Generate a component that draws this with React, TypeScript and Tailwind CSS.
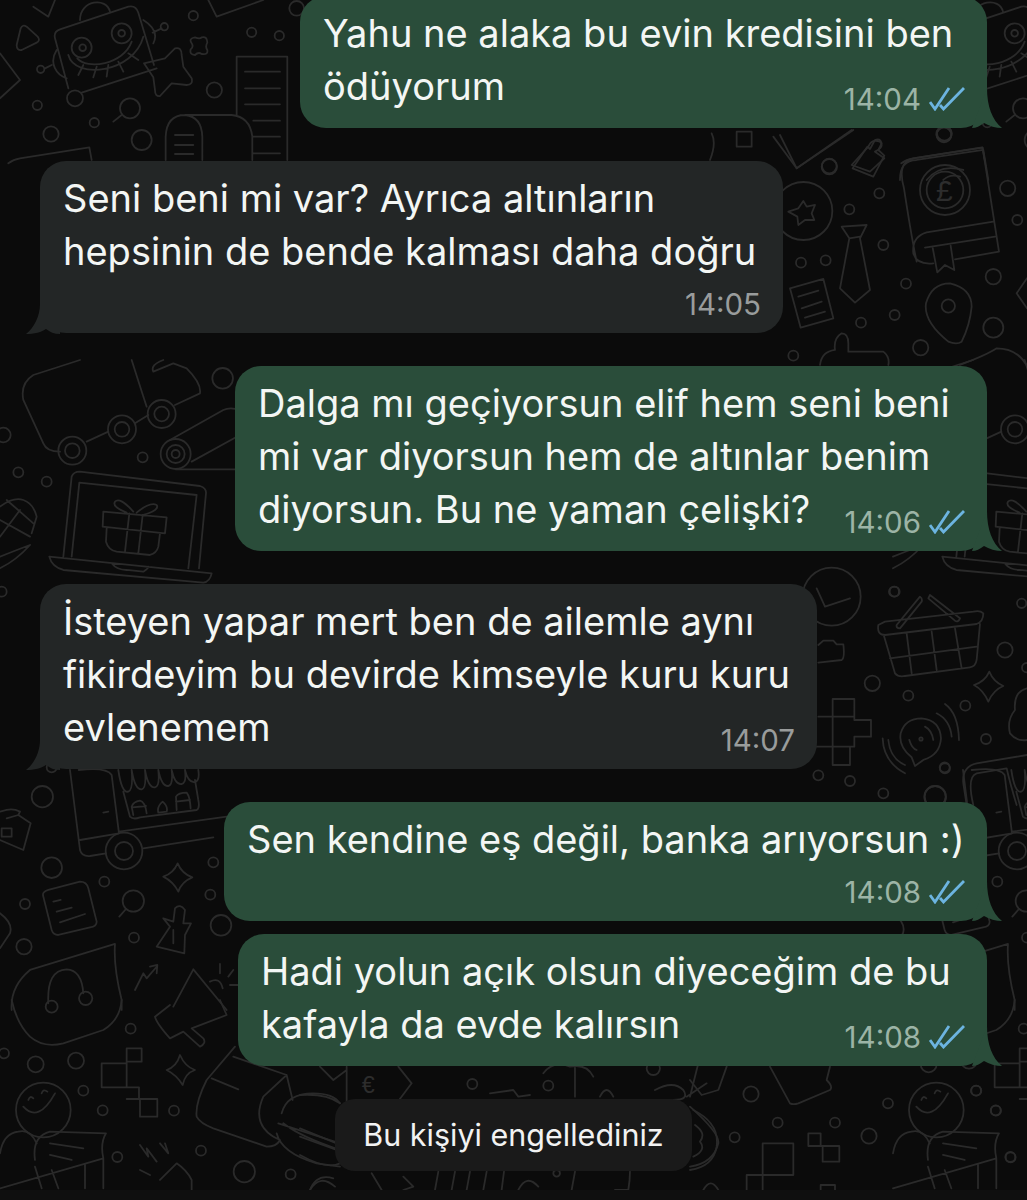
const font = { fontFamily: "Inter, 'Liberation Sans', sans-serif" };

type Msg = {
  out: boolean;
  width: number;
  lines: string[];
  time: string;
  inline: boolean;
  mt: string;
};

const messages: Msg[] = [
  { out: true, width: 687, lines: ["Yahu ne alaka bu evin kredisini ben", "ödüyorum"], time: "14:04", inline: true, mt: "-mt-[4px]" },
  { out: false, width: 743, lines: ["Seni beni mi var? Ayrıca altınların", "hepsinin de bende kalması daha doğru"], time: "14:05", inline: false, mt: "mt-[33px]" },
  { out: true, width: 752, lines: ["Dalga mı geçiyorsun elif hem seni beni", "mi var diyorsun hem de altınlar benim", "diyorsun. Bu ne yaman çelişki?"], time: "14:06", inline: true, mt: "mt-[33px]" },
  { out: false, width: 777, lines: ["İsteyen yapar mert ben de ailemle aynı", "fikirdeyim bu devirde kimseyle kuru kuru", "evlenemem"], time: "14:07", inline: true, mt: "mt-[33px]" },
  { out: true, width: 763, lines: ["Sen kendine eş değil, banka arıyorsun :)"], time: "14:08", inline: false, mt: "mt-[33px]" },
  { out: true, width: 749, lines: ["Hadi yolun açık olsun diyeceğim de bu", "kafayla da evde kalırsın"], time: "14:08", inline: true, mt: "mt-[13px]" },
];

function Ticks() {
  return (
    <svg width="36" height="24" viewBox="0 0 36 24" fill="none" stroke="#6cb4e0" strokeWidth="2.8" className="ml-[8px] mb-[2px] shrink-0">
      <path d="M1 15l5 7L20 1" />
      <path d="M11 18l3.5 4L35 1" />
    </svg>
  );
}

function Time({ msg }: { msg: Msg }) {
  return (
    <div className="flex shrink-0 items-end">
      <span className={`text-[29.5px] leading-[27px] ${msg.out ? "text-[#9cb4a6]" : "text-[#999c9c]"}`}>{msg.time}</span>
      {msg.out && <Ticks />}
    </div>
  );
}

function Bubble({ msg }: { msg: Msg }) {
  const last = msg.lines.length - 1;
  return (
    <div
      className={`relative rounded-[26px] pt-[11px] pb-[15px] pl-[23px] pr-[22px] text-[38px] leading-[53px] text-[#f3f6f4] ${msg.mt} ${
        msg.out ? "self-end mr-[40px] bg-[#2a4d3a]" : "self-start ml-[40px] bg-[#232626]"
      }`}
      style={{ width: msg.width }}
    >
      {msg.lines.map((line, i) => (
        <div key={i} className="flex items-end justify-between whitespace-nowrap">
          <span>{line}</span>
          {msg.inline && i === last && <Time msg={msg} />}
        </div>
      ))}
      {!msg.inline && (
        <div className="flex h-[40px] items-end justify-end">
          <Time msg={msg} />
        </div>
      )}
      {msg.out ? (
        <svg width="30" height="40" viewBox="0 0 30 40" className="absolute -right-[15px] bottom-0" fill="#2a4d3a">
          <path d="M15 0C15 18 20 32 30 40C24 40 17 38 12 35C8 38 4 40 0 40Z" />
        </svg>
      ) : (
        <svg width="34" height="30" viewBox="0 0 34 30" className="absolute -left-[14px] -bottom-[1px]" fill="#232626">
          <path d="M14 0C14 12 8 24 0 30C8 30 16 28 20 25C24 28 28 30 34 30L34 0Z" />
        </svg>
      )}
    </div>
  );
}

type C = [number, number, number];

function Layer({ x, y, d, c, text }: { x: number; y: number; d: string; c: C[]; text?: [string, number, number, number][] }) {
  return (
    <g transform={`translate(${x} ${y}) scale(0.3333)`}>
      <path d={d} />
      {c.map(([cx, cy, r], i) => (
        <circle key={i} cx={cx} cy={cy} r={r} />
      ))}
      {text?.map(([t, tx, ty, s], i) => (
        <text key={i} x={tx} y={ty} fontSize={s} fill="#2d2d2d" stroke="none" fontFamily="'Liberation Sans', sans-serif">
          {t}
        </text>
      ))}
    </g>
  );
}

function RepeatingDoodles() {
  return (
    <>
      {/* robot, star, document */}
      <Layer
        x={0}
        y={0}
        d="M165 115Q160 95 180 88L385 20Q408 15 415 38L462 195M470 205L245 278M205 265L165 115M240 60C240 0 320-10 330 35M170 150C145 190 170 225 200 235M430 60C470 85 470 110 460 130M458 98L485 85M135 205L155 195M205 165C225 240 400 220 430 110M232 175C260 210 370 195 395 125M250 195L235 225M290 200L280 232M325 195L320 230M355 185L370 215M385 160L415 180M432 190L495 175L525 145Q545 140 545 165L550 200L575 235Q580 255 560 255L515 250L480 288Q465 290 465 270L460 232ZM50 135L62 85Q68 72 80 80L113 110Q122 122 110 128L65 150Q50 152 50 135ZM575 130Q565 115 585 112Q600 118 605 112Q622 108 622 128Q615 140 622 150Q625 165 605 162Q595 155 585 165Q568 165 572 148Q582 140 575 130ZM710 345L710 170L862 170L862 480M735 215H840M735 265H840M735 313H840M760 362H840M760 410H840M760 460H840M497 480L497 410Q500 345 555 345L695 345Q750 350 757 410L757 480M555 345Q605 350 607 410L607 480M525 405H580M525 435H580M525 462H580M365 345L340 365M0 160L60 240L0 295M625 0L650 50L790 0M25 490Q40 478 60 475L268 442L275 480M100 20L145 50L165 0"
        c={[[245, 143, 30], [248, 143, 10], [365, 100, 30], [365, 100, 10], [493, 80, 11], [122, 208, 11], [225, 295, 24], [390, 325, 30], [580, 47, 14], [755, 97, 14], [838, 107, 14], [890, 25, 22], [643, 270, 23], [112, 316, 14], [283, 368, 14], [153, 402, 23], [425, 420, 30]]}
      />
      {/* conveyor and laptop */}
      <Layer
        x={0}
        y={360}
        d="M240 0L100 45Q60 70 70 120L130 250Q140 275 180 275M260 245L325 215M405 190L445 165M440 140Q430 110 395 0M525 135L600 100Q605 70 560 25L520 10L460 35Q450 15 490 0M510 240L670 150Q690 140 720 150M575 305L720 225M527 328L720 328M190 590L215 350Q220 335 240 335L600 378Q620 385 618 400L597 625M215 590L238 368L590 405L565 625M148 590L635 640Q630 665 610 668L190 630Q155 620 148 590ZM335 610Q350 630 380 630L430 635Q445 625 445 620M310 455L500 472L495 520L308 500ZM320 505L318 545Q325 570 350 575L450 585Q470 580 475 560L480 520M388 460L375 575M428 465L415 580M400 455Q360 410 345 425Q335 440 380 458M410 458Q450 425 470 435Q480 450 430 465M0 440Q40 410 70 420Q100 430 110 470L95 520M0 480L90 530M0 530L60 450M20 420L100 490M90 555Q50 600 0 625M0 590Q50 570 90 555"
        c={[[217, 272, 42], [217, 272, 22], [366, 208, 42], [366, 208, 22], [485, 162, 42], [485, 162, 22], [527, 282, 45], [527, 282, 27], [527, 282, 12], [668, 55, 31], [10, 225, 22], [428, 292, 15], [55, 337, 15], [140, 365, 15], [5, 695, 15]]}
      />
      {/* shop van, note, headset */}
      <Layer
        x={0}
        y={760}
        d="M210 30L240 270Q245 290 270 288L318 280M236 30Q320 20 335 45L357 220L240 240M430 265L640 232M357 215L680 170M370 95L390 170Q400 180 420 172L590 150Q600 145 595 120L585 60M355 30Q365 100 385 95Q400 90 395 30M395 30Q405 90 425 88Q440 85 435 30M435 30Q445 85 465 82Q480 80 475 30M475 30Q485 80 505 78Q520 75 515 30M515 30Q525 75 545 72Q560 70 555 30M555 30Q565 70 585 66Q600 62 595 30M325 155L310 158M400 165L395 140Q400 125 420 122Q435 125 440 160M398 142L438 138M475 158Q470 140 488 125Q505 140 500 155ZM530 150L528 110Q535 98 560 98Q570 110 572 145M528 125L570 120M0 155L20 150Q40 145 60 155L55 165L92 190L70 270L0 240M20 175L55 165M5 205H35V230H5ZM130 410Q125 395 145 390L240 365Q260 365 265 385L290 485Q290 500 270 502L175 525Q160 525 155 510ZM160 425L182 420M170 455L215 443M180 487L255 462M378 447L358 470M490 350Q520 340 533 310Q545 340 577 352Q545 365 535 395Q520 365 490 350ZM470 560L510 500L490 475L520 485L525 445Q540 430 555 450L550 490L573 490L555 525L553 580ZM520 510L520 550M405 690L430 640L440 655L472 618M450 620L472 615L470 640M35 750Q30 680 90 630L345 552Q340 620 365 720L365 750M145 730Q140 630 200 628Q245 630 250 700M520 740L580 628L680 750M660 612L660 640M700 630L685 650M690 675L715 675M630 665Q660 650 668 685M0 460Q40 490 30 520L0 565"
        c={[[372, 273, 55], [372, 273, 27], [127, 110, 32], [155, 323, 31], [313, 365, 15], [75, 432, 15], [72, 560, 23], [402, 533, 15], [640, 307, 15], [631, 404, 15], [663, 496, 31], [155, 22, 15], [257, 715, 20], [155, 740, 18], [400, 423, 32]]}
      />
      {/* smiley, hand, bag, burger */}
      <Layer
        x={0}
        y={1000}
        d="M35 0Q50 70 90 110Q130 145 190 130L310 90Q360 60 365 0M465 50L510 15M465 50Q470 70 510 115L550 95L600 140Q620 130 610 115L575 85L680 45L660 0M305 190H380V145H425V185H380V262H305ZM380 262H417V297H472V350H420V297H380M500 210Q530 200 540 165Q555 200 585 210Q555 220 548 255Q530 225 500 210ZM70 320Q115 370 165 280M85 300Q90 285 100 295M125 280Q130 265 142 275M55 395Q10 400 0 460M55 395Q90 385 110 430M105 480Q95 410 150 395L318 400Q300 430 310 475M150 430L250 445M150 465L215 480M0 565L310 475L310 565M255 495L255 565M105 500L125 565M155 510L175 565M420 435L445 470L440 445L470 485M480 430L505 460L495 430M420 510L450 525M480 540L530 490Q560 510 575 540L575 570M705 140L620 240Q585 310 590 350Q600 370 640 385L800 440Q830 440 840 420Q750 380 790 290L860 225L700 170M635 235L715 268M860 225L878 300M845 340Q860 280 940 280Q1000 280 1020 310M835 370L1020 430M830 400Q845 460 950 490L1020 500M850 370Q900 410 1020 450M930 570Q950 520 1000 535"
        c={[[130, 330, 82], [392, 86, 15], [12, 160, 15], [107, 193, 24], [228, 182, 24], [250, 272, 15], [308, 331, 15], [522, 332, 15], [352, 471, 15], [603, 452, 15], [733, 515, 32], [872, 523, 15]]}
      />
    </>
  );
}

function Doodles() {
  return (
    <svg width="1027" height="1190" viewBox="0 0 1027 1190" fill="none" stroke="#2a2a2a" strokeWidth="5.4" strokeLinejoin="round" strokeLinecap="round" className="absolute left-0 top-0 bg-[#0b0b0b]">
      <RepeatingDoodles />
      <g transform="translate(893 0)">
        <RepeatingDoodles />
      </g>
      {/* below first bubble */}
      <Layer
        x={700}
        y={0}
        d="M220 410L290 505L460 390M35 400Q50 430 30 480M110 395H155V440H110ZM455 495L505 440Q515 415 540 425Q555 440 525 455L553 475L510 515ZM600 540Q600 480 650 480L850 450L865 540M680 540Q720 490 790 510M730 540Q750 520 780 530"
        c={[[733, 400, 22], [388, 498, 22]]}
      />
      {/* book, pin, tie */}
      <Layer
        x={780}
        y={125}
        d="M410 410Q395 340 372 190Q350 110 400 100L608 68L657 380L525 403M640 290L440 322Q395 335 400 385Q410 420 460 415M645 335L435 368M458 368L472 442L495 420L523 435L512 362M505 650Q430 590 438 535Q455 475 510 475Q575 490 575 545Q570 600 545 650Q530 660 505 650ZM185 305L260 300L240 340L270 495L225 533L180 490L208 340ZM208 340L240 335M25 260L55 250L70 228L80 245L105 240L95 265L103 285L75 285L55 300L52 275ZM218 130L262 65L270 72L285 45Q300 38 305 55L295 75L313 92L280 155ZM30 490L130 462L160 580L62 608ZM55 515L115 497M65 550L125 530M75 578L135 560M0 30L50 130L215 15M120 720Q125 680 165 675Q160 640 185 625Q205 625 205 655L205 680L310 680Q330 695 325 720M540 720Q620 690 650 670Q710 670 740 720M741 460L710 505L741 550"
        c={[[495, 195, 75], [495, 195, 55], [505, 543, 20], [70, 258, 87], [148, 125, 23], [298, 205, 15], [208, 253, 15], [310, 360, 15], [63, 413, 15], [137, 406, 15], [378, 476, 15], [640, 455, 23], [683, 190, 23], [712, 285, 15], [243, 593, 15], [344, 570, 15], [40, 692, 15], [422, 668, 23], [640, 608, 30], [492, 30, 22]]}
        text={[["£", 468, 228, 90]]}
      />
      {/* basket, speaker, blocks */}
      <Layer
        x={810}
        y={550}
        d="M20 115L45 170L120 145M25 285L40 272L70 272L80 283L100 283Q105 325 95 330L25 338M205 225Q200 255 225 255L500 222Q520 215 520 190Q510 180 490 185L225 215ZM222 258L255 370Q265 382 285 378L480 352Q497 350 500 330L510 222M290 250L305 370M365 245L380 360M435 235L455 355M240 325L500 290M260 225L330 140Q338 145 335 155L270 235Q258 235 260 225ZM360 135L450 205Q445 218 435 212L355 145ZM492 405Q525 395 538 365Q550 395 580 408Q550 420 535 455Q520 420 492 405ZM68 447H133V510H183V560H133V590H120V645H68V590H0M68 447V590M25 500H133M68 590H120M315 648L305 622Q265 590 272 550Q285 505 335 505Q390 510 393 565Q390 615 340 630ZM298 570Q305 595 320 600M345 530Q365 540 370 570M380 490Q420 510 425 560M405 462Q445 490 447 570M235 570Q240 625 285 645M218 565Q220 635 285 670M651 615L500 640Q455 650 460 700L470 765M490 765Q470 680 500 670L590 655Q600 700 620 765M651 415Q610 425 615 480Q590 510 600 550Q620 575 651 570"
        c={[[65, 140, 87], [333, 567, 5], [252, 125, 15], [187, 400, 23], [295, 437, 15], [466, 467, 15], [585, 300, 23], [635, 160, 14], [650, 353, 14], [528, 567, 15], [405, 655, 15], [25, 676, 15], [120, 693, 15], [220, 730, 15], [375, 740, 32]]}
      />
      {/* under the notice */}
      <Layer
        x={300}
        y={1040}
        d="M60 80L100 120L140 90M140 80V190M295 80L335 130L290 190M570 160L640 150L655 170L690 165M825 80V170M0 165Q80 160 120 190M0 265L110 310M0 290L110 330M0 345Q80 390 120 370M215 400L245 450M310 410L340 440L310 450M405 450L415 395M455 450L465 395M500 450L510 395M550 450L560 395M605 450L612 395M655 450Q680 400 715 440M815 450L825 395M945 450H985M985 450Q990 420 990 395M30 450Q60 400 105 440M1180 210Q1260 250 1250 320Q1240 380 1170 390M1065 150Q1120 120 1150 150Q1170 180 1120 180M1160 170L1220 130M1200 50L1170 170M730 100Q760 60 810 80Q860 70 880 110M900 170Q920 130 940 170"
        c={[[517, 132, 15], [745, 137, 15], [1060, 85, 20], [770, 400, 10]]}
        text={[["€", 185, 160, 70]]}
      />
      {/* bottom right */}
      <Layer
        x={690}
        y={1060}
        d="M218 345V250H310V345H170V390M218 345V390M355 220H392V258H448V305H398V258H355ZM0 60L35 105L85 90L110 20M240 20L300 130Q310 135 325 130L420 90Q430 80 410 60L420 20M0 140Q90 220 85 250Q70 310 0 320M15 195Q50 220 30 245Q50 270 10 290M40 390Q62 350 85 390M392 390V375H435V390"
        c={[[183, 102, 23], [263, 188, 15], [435, 188, 15], [134, 232, 15], [537, 228, 23], [594, 130, 15], [858, 92, 15], [918, 152, 15], [962, 292, 15]]}
      />
    </svg>
  );
}

export default function App() {
  return (
    <div className="relative h-[1200px] w-[1027px] overflow-hidden bg-[#0f0f0f]" style={font}>
      <Doodles />
      <div className="relative flex flex-col">
        {messages.map((m, i) => (
          <Bubble key={i} msg={m} />
        ))}
        <div className="mt-[33px] flex h-[72px] w-[357px] items-center justify-center self-center rounded-[20px] bg-[#1a1a1a] text-[30.5px] text-[#f2f2f2]">
          Bu kişiyi engellediniz
        </div>
      </div>
    </div>
  );
}
